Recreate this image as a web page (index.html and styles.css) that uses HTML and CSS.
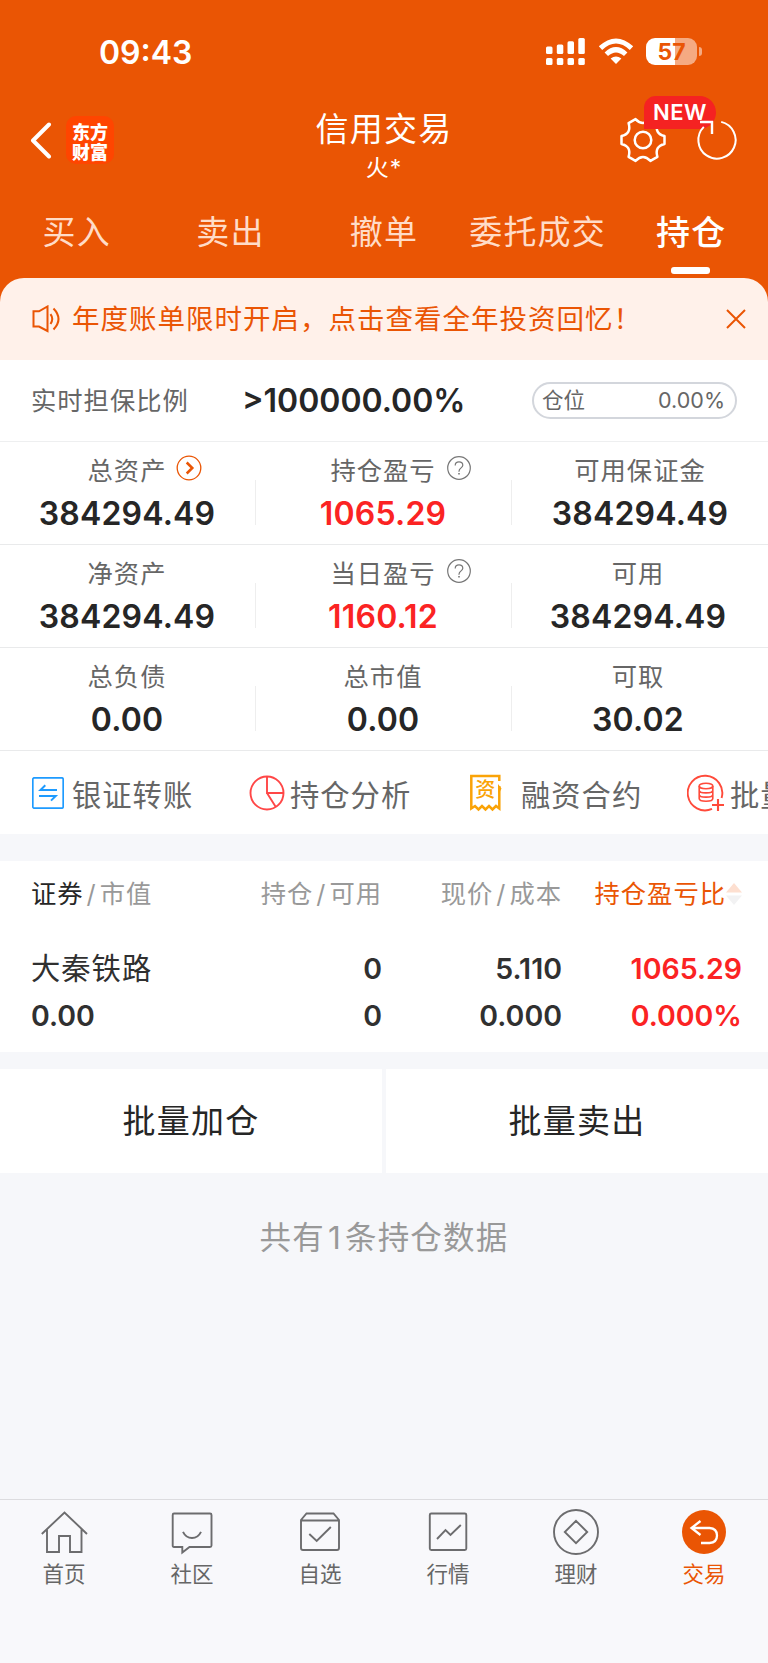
FILE: index.html
```html
<!DOCTYPE html>
<html lang="zh-CN">
<head>
<meta charset="utf-8">
<title>信用交易</title>
<link rel="stylesheet" href="styles.css">
</head>
<body>
<div class="screen">
  <header class="top">
    <div class="status">
      <span class="clock">09:43</span>
      <div class="status-icons">
        <svg class="signal" width="40" height="28" viewBox="0 0 40 28" fill="#fff"><rect x="0" y="8.500" width="6.500" height="7.500" rx="1.500"/><rect x="10.800" y="6.500" width="6.500" height="9.500" rx="1.500"/><rect x="21.500" y="3.200" width="6.500" height="12.800" rx="1.500"/><rect x="32.300" y="0" width="6.500" height="16" rx="1.500"/><rect x="0" y="20" width="6.500" height="7" rx="1.500"/><rect x="10.800" y="20" width="6.500" height="7" rx="1.500"/><rect x="21.500" y="20" width="6.500" height="7" rx="1.500"/><rect x="32.300" y="20" width="6.500" height="7" rx="1.500"/></svg>
        <svg class="wifi" width="36" height="28" viewBox="0 0 36 28" fill="none" stroke="#fff" stroke-width="5"><path d="M2.500 10.200Q18-4.200 33.500 10.200"/><path d="M8.300 16.300Q18 7.200 27.700 16.300"/><path d="M18 26L12.600 20.600Q18 16.200 23.400 20.600Z" fill="#fff" stroke="none"/></svg>
        <div class="battery"><div class="cell">57</div><i class="nub"></i></div>
      </div>
    </div>
    <div class="nav">
      <div class="nav-left">
        <svg width="24" height="38" viewBox="0 0 24 38" fill="none" stroke="#fff" stroke-width="4" stroke-linecap="round" stroke-linejoin="round"><path d="M20 3.500L4 19.500L20 35.500"/></svg>
        <div class="logo"><span>东方</span><span>财富</span></div>
      </div>
      <div class="title"><h1>信用交易</h1><p>火*</p></div>
      <div class="nav-right">
        <div class="gear">
          <svg width="48" height="48" viewBox="-24 -24 48 48" fill="none" stroke="#fff" stroke-width="2.500" stroke-linejoin="round"><path d="M21.500-4L21.500 4Q11.300 6.500 14.400 16.900L7.450 20.900Q0 13.100-7.450 20.900L-14.400 16.900Q-11.300 6.500-21.500 4L-21.500-4Q-11.300-6.500-14.400-16.900L-7.450-20.900Q0-13.100 7.450-20.900L14.400-16.900Q11.300-6.500 21.500-4Z"/><circle r="8.300"/></svg>
          <span class="badge">NEW</span>
        </div>
        <svg class="refresh" width="44" height="44" viewBox="-22 -22 44 44" fill="none" stroke="#fff" stroke-width="2"><path d="M4.200-18.100A18.600 18.600 0 1 1-13.200-13.100"/><path d="M-17-18H-5V-6" stroke-width="2.400"/></svg>
      </div>
    </div>
    <nav class="tabs">
      <span>买入</span><span>卖出</span><span>撤单</span><span>委托成交</span><span class="on">持仓</span>
    </nav>
  </header>

  <main>
    <div class="notice-wrap">
      <div class="notice">
        <svg width="28" height="28" viewBox="0 0 28 28" fill="none" stroke="#ea5504" stroke-width="2"><path d="M1.500 6.300H7L15.500 1.500V26L7 21.500H1.500Z"/><path d="M18.500 9.200Q22 14 18.500 19"/><path d="M21.500 3.500Q31.500 14 21.500 24.500"/></svg>
        <span>年度账单限时开启，点击查看全年投资回忆！</span>
        <svg class="close" width="20" height="20" viewBox="0 0 20 20" stroke="#ea5504" stroke-width="2"><path d="M1 1L19 19M19 1L1 19"/></svg>
      </div>
    </div>

    <section class="ratio">
      <span class="ratio-label">实时担保比例</span>
      <b class="ratio-value">&gt;100000.00%</b>
      <div class="pill"><span>仓位</span><span class="pct">0.00%</span></div>
    </section>

    <section class="stats first">
      <div class="stat"><span class="name">总资产<svg class="mark go" width="26" height="26" viewBox="0 0 26 26" fill="none" stroke="#ea5504"><circle cx="13" cy="13" r="11.800" stroke-width="1.300"/><path d="M10.700 7.500L16.300 13L10.700 18.500" stroke-width="2.500"/></svg></span><b>384294.49</b></div>
      <div class="stat"><span class="name">持仓盈亏<svg class="mark" width="26" height="26" viewBox="0 0 26 26" fill="none" stroke="#777" stroke-width="1.200"><circle cx="13" cy="13" r="11.300"/><path d="M9.200 10.400Q9.200 6.900 13 6.900T16.800 10.300C16.800 12.800 13 13 13 16.200V16.700"/><path d="M13 18V19.600" stroke-width="1.600"/></svg></span><b class="red">1065.29</b></div>
      <div class="stat"><span class="name">可用保证金</span><b>384294.49</b></div>
    </section>
    <section class="stats">
      <div class="stat"><span class="name">净资产</span><b>384294.49</b></div>
      <div class="stat"><span class="name">当日盈亏<svg class="mark" width="26" height="26" viewBox="0 0 26 26" fill="none" stroke="#777" stroke-width="1.200"><circle cx="13" cy="13" r="11.300"/><path d="M9.200 10.400Q9.200 6.900 13 6.900T16.800 10.300C16.800 12.800 13 13 13 16.200V16.700"/><path d="M13 18V19.600" stroke-width="1.600"/></svg></span><b class="red">1160.12</b></div>
      <div class="stat"><span class="name">可用</span><b>384294.49</b></div>
    </section>
    <section class="stats">
      <div class="stat"><span class="name">总负债</span><b>0.00</b></div>
      <div class="stat"><span class="name">总市值</span><b>0.00</b></div>
      <div class="stat"><span class="name">可取</span><b>30.02</b></div>
    </section>

    <section class="actions">
      <div class="action transfer"><svg width="32" height="32" viewBox="0 0 32 32" fill="none" stroke="#1e9bff"><rect x=".8" y=".8" width="30.400" height="30.400" rx="1.500" stroke-width="1.700"/><path d="M13.300 8.300L8.500 13H25M7 19H23.700L19 23.600" stroke-width="2"/></svg><span>银证转账</span></div>
      <div class="action analysis"><svg width="36" height="36" viewBox="-18 -18 36 36" fill="none" stroke="#ff4747" stroke-width="1.900"><circle r="16.500"/><path d="M0-16.500V0H16.500M0 0L8.800 14"/></svg><span>持仓分析</span></div>
      <div class="action finance"><svg width="32" height="38" viewBox="0 0 32 38"><path d="M29.300 7V2H1.300V34.500L5 32L8.500 35.500L12 32L15.500 35.500L19 32L22.500 35.500L26 32L29.300 34.500V12" fill="none" stroke="#faa307" stroke-width="2.500"/><path d="M28 10L31.500 14.500L29.500 18.500H28Z" fill="#faa307"/><text x="15.300" y="23" text-anchor="middle" class="zi">资</text></svg><span>融资合约</span></div>
      <div class="action batch"><svg width="38" height="38" viewBox="0 0 38 38" fill="none" stroke="#ff4a3a" stroke-width="1.900"><path d="M34.600 24A17.300 17.300 0 1 0 25 34.900"/><ellipse cx="19" cy="12" rx="6.800" ry="2.700" stroke-width="1.600"/><path d="M12.200 12V24.500Q12.200 27.200 19 27.200T25.800 24.500V12M12.200 16.200Q12.200 18.900 19 18.900T25.800 16.200M12.200 20.400Q12.200 23.100 19 23.100T25.800 20.400" stroke-width="1.600"/><path d="M31 25V37M25 31H37" stroke-width="2.100"/></svg><span>批量买入</span></div>
    </section>

    <section class="table">
      <div class="thead">
        <span class="dim"><em>证券</em><i>/</i>市值</span>
        <span class="dim">持仓<i>/</i>可用</span>
        <span class="dim">现价<i>/</i>成本</span>
        <span class="sort">持仓盈亏比<svg width="16" height="22" viewBox="0 0 16 22"><path d="M0 9.500L8 0L16 9.500Z" fill="#fddfd0"/><path d="M0 12.500H16L8 22Z" fill="#f2f2f3"/></svg></span>
      </div>
      <div class="trow"><span class="stock">大秦铁路</span><b>0</b><b>5.110</b><b class="red">1065.29</b></div>
      <div class="trow second"><b>0.00</b><b>0</b><b>0.000</b><b class="red">0.000%</b></div>
    </section>

    <section class="bulk"><div>批量加仓</div><div>批量卖出</div></section>
    <p class="total">共有<i>1</i>条持仓数据</p>
  </main>

  <footer class="tabbar">
    <div><svg width="48" height="48" viewBox="0 0 48 48"><path d="M1.800 25L24.500 3.500L47 25M7 20.500V43H19V27H30V43H41.500V20.500"/></svg><span>首页</span></div>
    <div><svg width="48" height="48" viewBox="0 0 48 48"><path d="M6 4.500H42Q43.500 4.500 43.500 6V36.500Q43.500 38 42 38H21.500L14.300 43.500V38H6Q4.700 38 4.700 36.500V6Q4.700 4.500 6 4.500Z"/><path d="M15 22.800Q18 29 24 29T33 22.800"/></svg><span>社区</span></div>
    <div><svg width="48" height="48" viewBox="0 0 48 48"><path d="M5 11L10.500 4.500H37.500L43 11V39Q43 41 41 41H7Q5 41 5 39ZM5 11.500H43"/><path d="M13.300 25L20.700 32L34.800 18"/></svg><span>自选</span></div>
    <div><svg width="48" height="48" viewBox="0 0 48 48"><rect x="5.800" y="4.500" width="36.500" height="36.500" rx="1.500"/><path d="M13 30L21.500 21L26.500 26L36.800 16"/></svg><span>行情</span></div>
    <div><svg width="48" height="48" viewBox="0 0 48 48"><circle cx="24" cy="23" r="22"/><path d="M24 11.800L35.200 23L24 34.200L12.800 23Z"/></svg><span>理财</span></div>
    <div class="on"><svg width="48" height="48" viewBox="0 0 48 48"><circle cx="24" cy="23" r="22" class="disc"/><path class="arrow" d="M20.500 12L11.500 19L20.500 26M12.500 19H29.500Q37 19.500 37 26.500T29.500 34H21"/></svg><span>交易</span></div>
  </footer>
</div>
</body>
</html>
```
FILE: styles.css
```css
* { box-sizing: border-box; margin: 0; padding: 0; }
body { background: #f6f7fa; font-family: Inter, "Noto Sans CJK SC", sans-serif; color: #262626; }
i, em { font-style: normal; }
b, h1 { font-weight: 600; }
svg { display: block; flex: none; }
.screen { width: 768px; height: 1663px; display: flex; flex-direction: column; overflow: hidden; }
.red { color: #fb2323; }

/* header */
.top { height: 278px; background: #ea5504; color: #fff; flex: none; }
.status { height: 104px; display: flex; justify-content: space-between; padding: 0 66px 0 99px; }
.clock { font-size: 32px; font-weight: 600; line-height: 105px; }
.status-icons { display: flex; align-items: flex-start; padding-top: 38px; }
.signal { margin-right: 12px; }
.wifi { margin-right: 12px; }
.battery { display: flex; align-items: center; gap: 2px; }
.cell { width: 51px; height: 27px; border-radius: 9px; background: linear-gradient(90deg, #fff 29px, #f5aa82 29px); color: #ea5504; font-size: 23px; font-weight: 700; line-height: 28px; text-align: center; }
.nub { width: 3px; height: 9px; border-radius: 0 4px 4px 0; background: #f5aa82; }
.nav { height: 82px; display: grid; grid-template-columns: 1fr auto 1fr; }
.nav-left { display: flex; align-items: flex-start; gap: 13px; padding: 12px 0 0 29px; }
.nav-left svg { margin-top: 5px; }
.logo { width: 48px; height: 48px; border-radius: 10px; background: #ff4500; display: flex; flex-direction: column; padding-top: 5px; font: 900 18px/20px "Noto Sans CJK SC", sans-serif; text-align: center; }
.title { text-align: center; }
.title h1 { font-size: 33px; font-weight: 400; letter-spacing: 1.2px; line-height: 50px; }
.title p { font-size: 23px; line-height: 28px; letter-spacing: 1px; }
.nav-right { display: flex; justify-content: flex-end; padding: 12px 29px 0 0; gap: 28px; }
.gear { position: relative; height: 48px; }
.badge { position: absolute; left: 25px; top: -20px; width: 72px; height: 33px; border-radius: 12px 17px 17px 0; background: #f52222; font-size: 22px; font-weight: 600; letter-spacing: .5px; line-height: 33px; text-align: center; }
.refresh { position: relative; margin-top: 2px; }
.tabs { height: 92px; display: grid; grid-template-columns: repeat(5, 1fr); text-align: center; font-size: 33px; letter-spacing: 1.2px; line-height: 93px; color: #ffdcc8; }
.tabs .on { color: #fff; font-weight: 500; font-size: 34px; position: relative; }
.tabs .on::after { content: ""; position: absolute; left: 57px; top: 81px; width: 39px; height: 7px; border-radius: 3px; background: #fff; }

/* notice */
.notice-wrap { background: #ea5504; }
.notice { height: 82px; border-radius: 24px 24px 0 0; background: #fff1ea; color: #ea5504; display: flex; align-items: center; padding: 0 22px 0 32px; font-size: 27.500px; letter-spacing: 1px; line-height: 82px; white-space: nowrap; }
.notice span { margin-left: 12px; }
.close { margin-left: auto; }

.ratio { height: 82px; display: flex; align-items: center; padding: 0 31px; background: #fff; border-bottom: 1px solid #eeeff0; line-height: 81px; }
.ratio-label { width: 211px; font-size: 25.300px; letter-spacing: 1px; color: #666; }
.ratio-value { font-size: 32px; }
.pill { margin-left: auto; width: 205px; height: 37px; border: 2px solid #d3d6dc; border-radius: 19px; display: flex; justify-content: space-between; padding: 0 10px 0 8px; font-size: 21.500px; line-height: 33px; color: #666; }

/* stats */
.stats { height: 103px; display: grid; grid-template-columns: 1fr 1fr 1fr; background: #fff; border-bottom: 1px solid #e9eaeb; }
.stat { display: flex; flex-direction: column; align-items: center; padding-top: 10px; background: linear-gradient(#eee, #eee) right 38px / 1px 45px no-repeat; }
.stat:last-child { background: none; padding-right: 4px; }
.stats.first .stat:last-child { padding-right: 0; }
.stat:first-child { padding-right: 2px; }
.stat:nth-child(2) { padding-right: 2px; }
.name { position: relative; font-size: 25.300px; line-height: 38px; letter-spacing: 1px; color: #666; }
.mark { position: absolute; left: calc(100% + 10px); top: 3px; }
.stat b { font-size: 32px; line-height: 46px; margin-top: 1px; letter-spacing: .2px; }

/* shortcuts */
.actions { height: 83px; display: flex; align-items: center; padding-left: 32px; background: #fff; font-size: 29.300px; letter-spacing: 1px; color: #666; overflow: hidden; white-space: nowrap; }
.action { display: flex; align-items: center; flex: none; }
.transfer { gap: 8px; width: 217px; }
.analysis { gap: 5px; width: 221px; }
.finance { gap: 19px; width: 217px; }
.batch { gap: 5px; }
.zi { font: 500 20px "Noto Sans CJK SC", sans-serif; letter-spacing: 0; fill: #faa307; }

/* holdings */
.table { margin-top: 27px; height: 191px; background: #fff; }
.thead, .trow { display: grid; grid-template-columns: 200px 151px 180px 180px; padding-left: 31px; text-align: right; }
.thead { height: 84px; line-height: 66px; font-size: 25.300px; letter-spacing: 1px; color: #999; }
.thead em { color: #262626; }
.thead i { padding: 0 3px; }
.thead > :first-child, .trow > :first-child { text-align: left; }
.sort { display: flex; align-items: center; justify-content: flex-end; height: 66px; color: #ea5504; }
.trow { height: 47px; line-height: 48px; font-size: 28.500px; color: #303030; }
.stock { font-size: 29.300px; letter-spacing: 1px; }

.bulk { margin-top: 17px; display: grid; grid-template-columns: 382px 1fr; gap: 4px; text-align: center; font-size: 33px; letter-spacing: 1.300px; line-height: 104px; height: 103px; }
.bulk div { background: #fff; }
.total { margin-top: 33px; text-align: center; font-size: 31.500px; letter-spacing: 1.200px; line-height: 66px; color: #999; }
.total i { padding: 0 3px; }

/* bottom bar */
.tabbar { margin-top: auto; height: 164px; flex: none; display: grid; grid-template-columns: repeat(6, 1fr); border-top: 1px solid #dcdcdf; background: #f8f8fb; padding-top: 9px; color: #666; text-align: center; font-size: 21.500px; line-height: 30px; }
.tabbar svg { margin: 0 auto 2px; fill: none; stroke: #6c6c6e; stroke-width: 1.900; }
.tabbar .on { color: #ea5504; }
.tabbar .disc { fill: #ea5504; stroke: none; }
.tabbar .arrow { stroke: #fff; stroke-width: 2.300; }
```
